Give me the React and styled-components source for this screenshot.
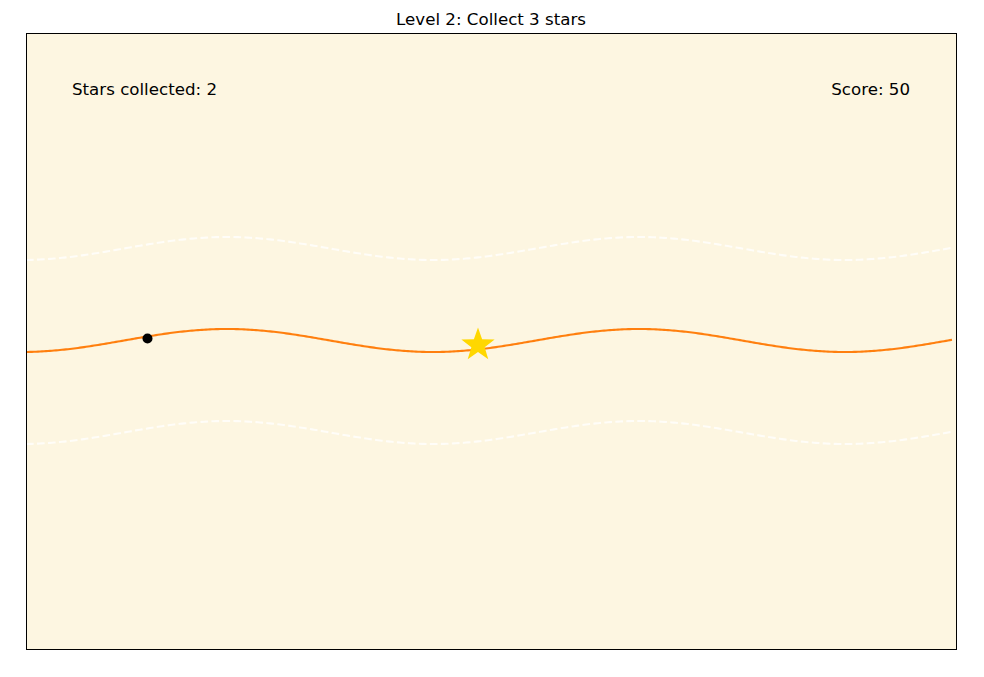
import React from 'react'
import styled, { createGlobalStyle } from 'styled-components'

const GlobalStyle = createGlobalStyle`
   html, body {
      margin: 0;
      padding: 0;
      background: #ffffff;
   }
   body {
      font-family: "DejaVu Sans", "Liberation Sans", sans-serif;
      color: #000000;
   }
`

const Figure = styled.div`
   width: 984px;
   height: 677px;
   background: #ffffff;
   display: flex;
   flex-direction: column;
   align-items: stretch;
`

const Title = styled.div`
   height: 33px;
   box-sizing: border-box;
   padding-top: 10px;
   text-align: center;
   font-size: 16.67px;
   line-height: 20px;
   margin-left: -2px;
`

const Axes = styled.div`
   position: relative;
   margin-left: 26px;
   width: 931px;
   height: 617px;
   box-sizing: border-box;
   border: 1px solid #000000;
   background: #fdf6e1;
`

const Plot = styled.svg`
   position: absolute;
   inset: 0;
   width: 100%;
   height: 100%;
   display: block;
`

const Hud = styled.div`
   position: relative;
   display: flex;
   justify-content: space-between;
   padding: 46px 46px 0 45px;
   font-size: 16.67px;
   line-height: 20px;
`

const HudText = styled.span`
   white-space: nowrap;
`

// page coords -> svg coords (svg origin at inner corner of the axes)
const OX = 27
const OY = 34

const wave = (offset) => {
   const pts = []
   for (let x = 26; x <= 952; x += 2) {
      const y = 340.5 + offset + 11.5 * Math.cos((2 * Math.PI * (x - 21)) / 412)
      pts.push(`${(x - OX).toFixed(1)},${(y - OY).toFixed(2)}`)
   }
   return 'M' + pts.join(' L')
}

const starPath = (cx, cy, R, r) => {
   const pts = []
   for (let i = 0; i < 10; i++) {
      const rad = i % 2 === 0 ? R : r
      const a = -Math.PI / 2 + (i * Math.PI) / 5
      pts.push(`${(cx + rad * Math.cos(a)).toFixed(2)},${(cy + rad * Math.sin(a)).toFixed(2)}`)
   }
   return 'M' + pts.join(' L') + 'Z'
}

const App = () => {
   return (
      <>
         <GlobalStyle />
         <Figure>
            <Title>Level 2: Collect 3 stars</Title>
            <Axes>
               <Plot viewBox="0 0 929 615" preserveAspectRatio="none">
                  <path d={wave(-92)} fill="none" stroke="#ffffff" strokeOpacity="0.75" strokeWidth="2.1" strokeDasharray="7.7 3.3" />
                  <path d={wave(92)} fill="none" stroke="#ffffff" strokeOpacity="0.75" strokeWidth="2.1" strokeDasharray="7.7 3.3" />
                  <path d={wave(0)} fill="none" stroke="#ff7f0e" strokeWidth="2.1" />
                  <circle cx={147.5 - OX} cy={338.5 - OY} r="5" fill="#000000" />
                  <path d={starPath(478 - OX, 345 - OY, 17.5, 7)} fill="#ffd700" />
               </Plot>
               <Hud>
                  <HudText>Stars collected: 2</HudText>
                  <HudText>Score: 50</HudText>
               </Hud>
            </Axes>
         </Figure>
      </>
   )
}

export default App
